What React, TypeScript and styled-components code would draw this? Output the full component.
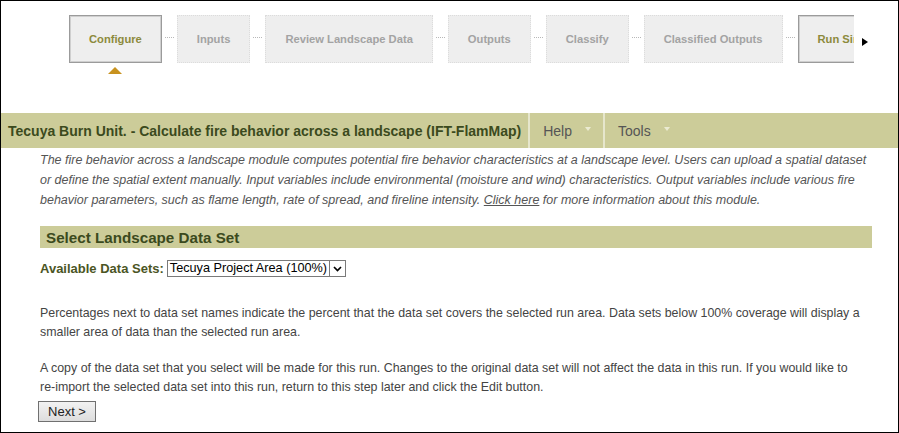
import React from "react";
import styled, { createGlobalStyle } from "styled-components";

const GlobalStyle = createGlobalStyle`
  html, body {
    margin: 0;
    padding: 0;
    background: #fff;
  }
  body {
    font-family: "Liberation Sans", Arial, sans-serif;
  }
`;

const Frame = styled.div`
  width: 899px;
  height: 433px;
  box-sizing: border-box;
  border: 1px solid #000;
  overflow: hidden;
  background: #fff;
`;

const StepsArea = styled.div`
  height: 112px;
  box-sizing: border-box;
  padding: 14px 0 0 68px;
  display: flex;
  align-items: flex-start;
`;

const StepsStrip = styled.div`
  width: 785px;
  height: 60px;
  overflow: hidden;
  display: flex;
  align-items: flex-start;
  flex-shrink: 0;
`;

const Step = styled.div<{ $active?: boolean }>`
  position: relative;
  flex-shrink: 0;
  height: 48px;
  box-sizing: border-box;
  padding: 0 19px;
  display: flex;
  align-items: center;
  background: #eeeeee;
  font-size: 11.2px;
  font-weight: bold;
  white-space: nowrap;
  color: ${(p) => (p.$active ? "#8c8a3c" : "#a3a3a3")};
  border: ${(p) => (p.$active ? "1px solid #9b9b9b" : "1px dotted #dcdcdc")};
  box-shadow: ${(p) => (p.$active ? "inset 0 0 0 1px #cfcfcf" : "none")};
`;

const Pointer = styled.span`
  position: absolute;
  left: 50%;
  top: 51px;
  margin-left: -7px;
  width: 0;
  height: 0;
  border-left: 7px solid transparent;
  border-right: 7px solid transparent;
  border-bottom: 7px solid #c8921f;
`;

const Connector = styled.div`
  flex-shrink: 0;
  width: 15px;
  height: 48px;
  display: flex;
  align-items: center;
  justify-content: center;
  &::before {
    content: "";
    display: block;
    width: 9px;
    margin-top: -4px;
    border-top: 1px dotted #b8b8b8;
  }
`;

const NextArrow = styled.div`
  margin: 23px 0 0 8px;
  width: 0;
  height: 0;
  border-top: 4px solid transparent;
  border-bottom: 4px solid transparent;
  border-left: 6px solid #000;
`;

const TitleBar = styled.div`
  height: 35px;
  background: #cccc99;
  display: flex;
  align-items: stretch;
`;

const Title = styled.div`
  display: flex;
  align-items: center;
  padding: 0 7px 0 7px;
  font-size: 14px;
  font-weight: bold;
  color: #3b4a1d;
  white-space: nowrap;
`;

const MenuItem = styled.div`
  display: flex;
  align-items: center;
  gap: 13px;
  padding: 0 12px 0 13px;
  border-left: 2px solid #e6e6cc;
  font-size: 14px;
  color: #555;
`;

const MenuCaret = styled.span`
  width: 0;
  height: 0;
  border-left: 3.5px solid transparent;
  border-right: 3.5px solid transparent;
  border-top: 4px solid #ebebd2;
  margin-top: -4px;
`;

const Content = styled.div`
  padding: 2px 26px 0 39px;
`;

const Intro = styled.p`
  margin: 0;
  font-size: 12.5px;
  line-height: 20px;
  font-style: italic;
  color: #555;
`;

const IntroLink = styled.a`
  color: #555;
  text-decoration: underline;
`;

const SectionHeader = styled.h2`
  margin: 16px 0 0;
  height: 22px;
  padding: 0 6px;
  display: flex;
  align-items: center;
  background: #cccc99;
  font-size: 15.2px;
  font-weight: bold;
  color: #3b4a1d;
`;

const FieldRow = styled.div`
  margin-top: 12px;
  display: flex;
  align-items: center;
  gap: 3px;
`;

const FieldLabel = styled.label`
  font-size: 13px;
  font-weight: bold;
  color: #4b5524;
`;

const SelectBox = styled.div`
  width: 179px;
  height: 17px;
  box-sizing: border-box;
  display: flex;
  align-items: stretch;
  justify-content: space-between;
  border: 1px solid #7a7a7a;
  background: #fff;
`;

const SelectValue = styled.span`
  padding: 0 2px 0 2px;
  font-size: 12.7px;
  line-height: 15px;
  color: #000;
  white-space: nowrap;
`;

const SelectButton = styled.span`
  width: 16px;
  border-left: 1px solid #7a7a7a;
  display: flex;
  align-items: center;
  justify-content: center;
`;

const BodyText = styled.p<{ $top: number }>`
  margin: ${(p) => p.$top}px 0 0;
  font-size: 12.4px;
  line-height: 19px;
  color: #444;
`;

const NoBreak = styled.span`
  white-space: nowrap;
`;

const Button = styled.button`
  margin: 4px 0 0 -2px;
  width: 58px;
  height: 21px;
  padding: 0;
  border: 1px solid #707070;
  border-radius: 0;
  background: linear-gradient(#f2f2f2, #dddddd);
  font-family: "Liberation Sans", Arial, sans-serif;
  font-size: 13px;
  color: #222;
`;

const steps = [
  "Configure",
  "Inputs",
  "Review Landscape Data",
  "Outputs",
  "Classify",
  "Classified Outputs",
  "Run Simulation",
];

export default function App() {
  return (
    <>
      <GlobalStyle />
      <Frame>
        <StepsArea>
          <StepsStrip>
            {steps.map((s, i) => (
              <React.Fragment key={s}>
                {i > 0 && <Connector />}
                <Step $active={i === 0 || i === steps.length - 1}>
                  {s}
                  {i === 0 && <Pointer />}
                </Step>
              </React.Fragment>
            ))}
          </StepsStrip>
          <NextArrow />
        </StepsArea>

        <TitleBar>
          <Title>Tecuya Burn Unit. - Calculate fire behavior across a landscape (IFT-FlamMap)</Title>
          <MenuItem>
            Help <MenuCaret />
          </MenuItem>
          <MenuItem>
            Tools <MenuCaret />
          </MenuItem>
        </TitleBar>

        <Content>
          <Intro>
            The fire behavior across a landscape module computes potential fire behavior characteristics at a
            landscape level. Users can upload a spatial dataset or define the spatial extent manually. Input
            variables include environmental (moisture and wind) characteristics. Output variables include various
            fire behavior parameters, such as flame length, rate of spread, and fireline intensity.{" "}
            <IntroLink href="#">Click here</IntroLink> for more information about this module.
          </Intro>

          <SectionHeader>Select Landscape Data Set</SectionHeader>

          <FieldRow>
            <FieldLabel>Available Data Sets:</FieldLabel>
            <SelectBox>
              <SelectValue>Tecuya Project Area (100%)</SelectValue>
              <SelectButton>
                <svg width="9" height="6" viewBox="0 0 9 6">
                  <path d="M1 1 L4.5 4.5 L8 1" fill="none" stroke="#000" strokeWidth="1.7" />
                </svg>
              </SelectButton>
            </SelectBox>
          </FieldRow>

          <BodyText $top={27}>
            Percentages next to data set names indicate the percent that the data set covers the selected run area.
            Data sets below 100% coverage will display a smaller area of data than the selected run area.
          </BodyText>
          <BodyText $top={17}>
            A copy of the data set that you select will be made for this run. Changes to the original data set will
            not affect the data in this run. If you would like to <NoBreak>re-import</NoBreak> the selected data set
            into this run, return to this step later and click the Edit button.
          </BodyText>
          <Button>Next &gt;</Button>
        </Content>
      </Frame>
    </>
  );
}
